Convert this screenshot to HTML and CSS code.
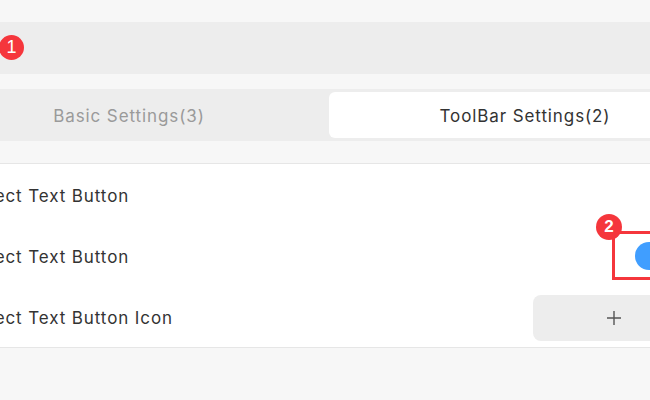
FILE: index.html
```html
<!DOCTYPE html>
<html>
<head>
<meta charset="utf-8">
<link rel="stylesheet" href="styles.css">
</head>
<body>
<div class="page">
  <div class="search">
    <span class="badge badge-one">1</span>
  </div>
  <div class="tabs">
    <div class="tab">Basic Settings(3)</div>
    <div class="tab active">ToolBar Settings(2)</div>
  </div>
  <div class="panel">
    <div class="row">
      <span class="label">Select Text Button</span>
    </div>
    <div class="row">
      <span class="label">Select Text Button</span>
      <div class="switch"><span class="knob"></span></div>
      <div class="mark"></div>
      <span class="badge badge-two">2</span>
    </div>
    <div class="row">
      <span class="label">Select Text Button Icon</span>
      <button class="add">
        <svg width="16" height="16" viewBox="0 0 16 16"><path d="M8 1v14M1 8h14" stroke="#555" stroke-width="1.4" fill="none"/></svg>
      </button>
    </div>
  </div>
</div>
</body>
</html>
```
FILE: styles.css
```css
html, body {
  margin: 0;
  padding: 0;
  background: #f7f7f7;
  overflow: hidden;
  width: 650px;
  height: 400px;
  font-family: Inter, "Liberation Sans", sans-serif;
}

.page {
  position: relative;
  padding-top: 22px;
}

.search {
  position: relative;
  height: 52px;
  background: #ededed;
}

.badge {
  position: absolute;
  display: flex;
  align-items: center;
  justify-content: center;
  border-radius: 50%;
  background: #f5363c;
  color: #fff;
  font-weight: 700;
  font-family: "Liberation Sans", Arial, sans-serif;
  z-index: 3;
}

.badge-one {
  width: 25px;
  height: 25px;
  left: -1px;
  top: 13px;
  font-size: 18px;
  font-weight: 400;
}

.tabs {
  margin-top: 15px;
  margin-left: -70px;
  width: 794px;
  box-sizing: border-box;
  height: 52px;
  padding: 3px;
  background: #ededed;
  display: grid;
  grid-template-columns: 1fr 1fr;
  gap: 4px;
}

.tab {
  display: flex;
  align-items: center;
  justify-content: center;
  font-size: 17px;
  letter-spacing: 0.9px;
  padding-top: 1px;
  color: #9a9a9a;
  border-radius: 6px;
}

.tab.active {
  background: #fff;
  color: #333;
}

.panel {
  margin-top: 22px;
  margin-left: -70px;
  width: 794px;
  background: #fff;
  border-top: 1px solid #e6e6e6;
  border-bottom: 1px solid #e6e6e6;
}

.row {
  position: relative;
  height: 61px;
  display: flex;
  align-items: center;
  justify-content: space-between;
  padding: 0 29px 0 37px;
}

.label {
  font-size: 17px;
  letter-spacing: 0.9px;
  padding-top: 3px;
  color: #333;
}

.switch {
  width: 60px;
  height: 28px;
  display: flex;
  align-items: center;
}

.knob {
  width: 28px;
  height: 28px;
  border-radius: 50%;
  background: #409eff;
}

.mark {
  position: absolute;
  left: 682px;
  top: 6px;
  width: 120px;
  height: 43px;
  border: 3px solid #f5363c;
}

.badge-two {
  width: 26px;
  height: 26px;
  left: 666px;
  top: -11px;
  font-size: 17px;
}

.add {
  width: 162px;
  height: 46px;
  margin-top: 2px;
  border: none;
  border-radius: 8px;
  background: #ededed;
  display: flex;
  align-items: center;
  justify-content: center;
  padding: 0;
}

.add svg {
  display: block;
}
```
